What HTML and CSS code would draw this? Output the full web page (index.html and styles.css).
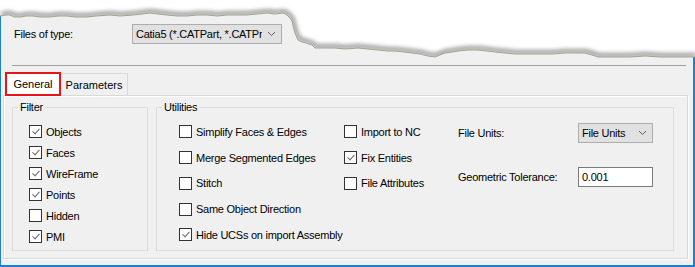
FILE: index.html
```html
<!DOCTYPE html>
<html lang="en">
<head>
  <meta charset="UTF-8" />
  <title>Import Options</title>
  <link rel="stylesheet" href="styles.css">
</head>
<body>
  <div class="window">
    <!-- torn top edge of the screenshot -->
    <svg class="torn" width="695" height="70" viewBox="0 0 695 70">
      <defs>
        <filter id="soft" x="-5%" y="-50%" width="110%" height="200%">
          <feGaussianBlur stdDeviation="2.2" />
        </filter>
        <clipPath id="above">
          <path id="tornShape" d="M0,0 H695 V57 L678,57 660,57 645,56 630,57 618,57 608,57 598,57 592,55 585,53 575,53 565,53 552,54 535,54 522,54 515,54 505,53 495,52 487,51 478,50 468,50 458,51 452,52 445,53 440,55 435,57 428,56 420,54 412,53 404,52 395,51 388,51 378,50 368,49 358,48 345,49 335,48 325,48 315,48 312,45 306,43 302,42 298,40 295,33 293,26 292,21 290,18 287,15 283,13 275,14 267,13 257,14 247,15 237,15 227,15 217,16 207,15 197,15 187,16 177,16 167,15 158,14 150,13 142,14 133,15 120,16 110,15 96,16 87,17 75,17 67,16 58,16 50,17 40,17 33,16 26,16 20,17 14,17 10,15 6,15 0,16 Z" />
        </clipPath>
      </defs>
      <use href="#tornShape" fill="#fff" />
      <g clip-path="url(#above)">
        <polyline class="torn-shadow" filter="url(#soft)" transform="translate(1,-2)"
          points="0,16 6,15 10,15 14,17 20,17 26,16 33,16 40,17 50,17 58,16 67,16 75,17 87,17 96,16 110,15 120,16 133,15 142,14 150,13 158,14 167,15 177,16 187,16 197,15 207,15 217,16 227,15 237,15 247,15 257,14 267,13 275,14 283,13 287,15 290,18 292,21 293,26 295,33 298,40 302,42 306,43 312,45 315,48 325,48 335,48 345,49 358,48 368,49 378,50 388,51 395,51 404,52 412,53 420,54 428,56 435,57 440,55 445,53 452,52 458,51 468,50 478,50 487,51 495,52 505,53 515,54 522,54 535,54 552,54 565,53 575,53 585,53 592,55 598,57 608,57 618,57 630,57 645,56 660,57 678,57 695,57" />
      </g>
      <polyline class="torn-edge"
        points="0,16 6,15 10,15 14,17 20,17 26,16 33,16 40,17 50,17 58,16 67,16 75,17 87,17 96,16 110,15 120,16 133,15 142,14 150,13 158,14 167,15 177,16 187,16 197,15 207,15 217,16 227,15 237,15 247,15 257,14 267,13 275,14 283,13 287,15 290,18 292,21 293,26 295,33 298,40 302,42 306,43 312,45 315,48 325,48 335,48 345,49 358,48 368,49 378,50 388,51 395,51 404,52 412,53 420,54 428,56 435,57 440,55 445,53 452,52 458,51 468,50 478,50 487,51 495,52 505,53 515,54 522,54 535,54 552,54 565,53 575,53 585,53 592,55 598,57 608,57 618,57 630,57 645,56 660,57 678,57 695,57" />
    </svg>

    <div class="file-row">
      <span class="file-label">Files of type:</span>
      <div class="combo combo-wide">
        <span class="combo-text">Catia5 (*.CATPart, *.CATPr</span>
        <svg class="chevron" width="7" height="4" viewBox="0 0 7 4"><polyline points="0,0 3.5,3.5 7,0" /></svg>
      </div>
    </div>

    <div class="separator"></div>

    <div class="tabs">
      <div class="tab active">General</div>
      <div class="tab">Parameters</div>
    </div>

    <div class="panel">
      <fieldset class="group filter">
        <legend>Filter</legend>
        <label class="check"><span class="box checked"></span>Objects</label>
        <label class="check"><span class="box checked"></span>Faces</label>
        <label class="check"><span class="box checked"></span>WireFrame</label>
        <label class="check"><span class="box checked"></span>Points</label>
        <label class="check"><span class="box"></span>Hidden</label>
        <label class="check"><span class="box checked"></span>PMI</label>
      </fieldset>

      <fieldset class="group utilities">
        <legend>Utilities</legend>
        <div class="util-col first">
          <label class="check tall"><span class="box"></span>Simplify Faces &amp; Edges</label>
          <label class="check tall"><span class="box"></span>Merge Segmented Edges</label>
          <label class="check tall"><span class="box"></span>Stitch</label>
          <label class="check tall"><span class="box"></span>Same Object Direction</label>
          <label class="check tall"><span class="box checked"></span>Hide UCSs on import Assembly</label>
        </div>
        <div class="util-col second">
          <label class="check tall"><span class="box"></span>Import to NC</label>
          <label class="check tall"><span class="box checked"></span>Fix Entities</label>
          <label class="check tall"><span class="box"></span>File Attributes</label>
        </div>
        <div class="util-col third">
          <div class="field">
            <span class="field-label">File Units:</span>
            <div class="combo combo-small">
              <span class="combo-text">File Units</span>
              <svg class="chevron" width="7" height="4" viewBox="0 0 7 4"><polyline points="0,0 3.5,3.5 7,0" /></svg>
            </div>
          </div>
          <div class="field second-field">
            <span class="field-label">Geometric Tolerance:</span>
            <div class="textbox">0.001</div>
          </div>
        </div>
      </fieldset>
    </div>
  </div>
</body>
</html>
```

FILE: styles.css
```css
body {
  margin: 0;
  background-color: #fff;
  font-family: "Liberation Sans", Arial, sans-serif;
  font-size: 11px;
  letter-spacing: -0.25px;
  color: #000;
}
.window {
  position: relative;
  width: 695px;
  height: 267px;
  box-sizing: border-box;
  padding-top: 24px;
  background-color: #f0f0f0;
  border-left: 1px solid #1c7fd6;
  border-right: 2px solid #1c7fd6;
  border-bottom: 2px solid #1c7fd6;
}
.torn {
  position: absolute;
  top: 0;
  left: -1px;
  z-index: 2;
}
.torn-shadow {
  fill: none;
  stroke: #4a4a4a;
  stroke-width: 3;
  opacity: 0.75;
}
.torn-edge {
  fill: none;
  stroke: #a2a290;
  stroke-width: 1;
}
.file-row {
  display: flex;
  align-items: center;
  height: 20px;
  padding-left: 13px;
}
.file-label {
  width: 118px;
}
.combo {
  display: flex;
  align-items: center;
  height: 20px;
  box-sizing: border-box;
  background-color: #e1e1e1;
  border: 1px solid #adadad;
  padding-left: 3px;
}
.combo-wide {
  width: 150px;
}
.combo-small {
  width: 75px;
}
.combo-text {
  flex: 1;
  overflow: hidden;
  white-space: nowrap;
}
.chevron {
  flex: none;
  margin: 0 6px 0 6px;
}
.chevron polyline {
  fill: none;
  stroke: #606060;
  stroke-width: 1;
}
.separator {
  height: 1px;
  margin: 21px 0 0 11px;
  width: 674px;
  background-color: #a0a0a0;
}
.tabs {
  display: flex;
  align-items: flex-end;
  height: 24px;
  margin: 5px 0 0 4px;
}
.tab {
  display: flex;
  align-items: center;
  justify-content: center;
  box-sizing: border-box;
  letter-spacing: 0;
}
.tab.active {
  width: 56px;
  height: 24px;
  background-color: #fff;
  border: 2px solid #e8141c;
  position: relative;
  z-index: 1;
  margin-bottom: -1px;
}
.tab:not(.active) {
  width: 67px;
  height: 22px;
  border: 1px solid #d9d9d9;
  border-left: none;
  border-bottom: none;
  padding-top: 1px;
}
.panel {
  display: flex;
  gap: 8px;
  width: 685px;
  height: 164px;
  box-sizing: border-box;
  margin-left: 2px;
  padding: 5px 13px 7px 8px;
  border: 1px solid #d9d9d9;
  box-shadow: 1px 1px 0 #fff, inset 1px 1px 0 #fff;
}
.group {
  margin: 0;
  min-width: 0;
  border: 1px solid #dcdcdc;
  box-sizing: border-box;
}
.group legend {
  padding: 0 2px;
  line-height: 13px;
}
.filter {
  width: 136px;
  padding: 7px 0 0 16px;
}
.filter legend {
  margin-left: -11px;
}
.utilities {
  flex: 1;
  display: flex;
  padding: 5px 0 0 22px;
}
.utilities legend {
  margin-left: -17px;
}
.check {
  display: flex;
  align-items: center;
  height: 21px;
  white-space: nowrap;
}
.check.tall {
  height: 25.75px;
}
.box {
  position: relative;
  flex: none;
  width: 13px;
  height: 13px;
  box-sizing: border-box;
  border: 1px solid #333;
  background-color: #fff;
  margin-right: 4px;
}
.box.checked::after {
  content: "";
  position: absolute;
  left: 2px;
  top: 1px;
  width: 6px;
  height: 3px;
  border-left: 1.3px solid #6a6a6a;
  border-bottom: 1.3px solid #6a6a6a;
  transform: translate(0.5px, 1.5px) rotate(-48deg);
}
.util-col.first {
  width: 165px;
}
.util-col.second {
  width: 114px;
}
.util-col.third {
  padding-top: 4px;
}
.field {
  display: flex;
  align-items: center;
  height: 20px;
}
.field-label {
  width: 120px;
}
.second-field {
  margin-top: 24px;
}
.textbox {
  width: 75px;
  height: 20px;
  box-sizing: border-box;
  background-color: #fff;
  border: 1px solid #7a7a7a;
  padding: 2px 0 0 3px;
  line-height: 14px;
}
```
